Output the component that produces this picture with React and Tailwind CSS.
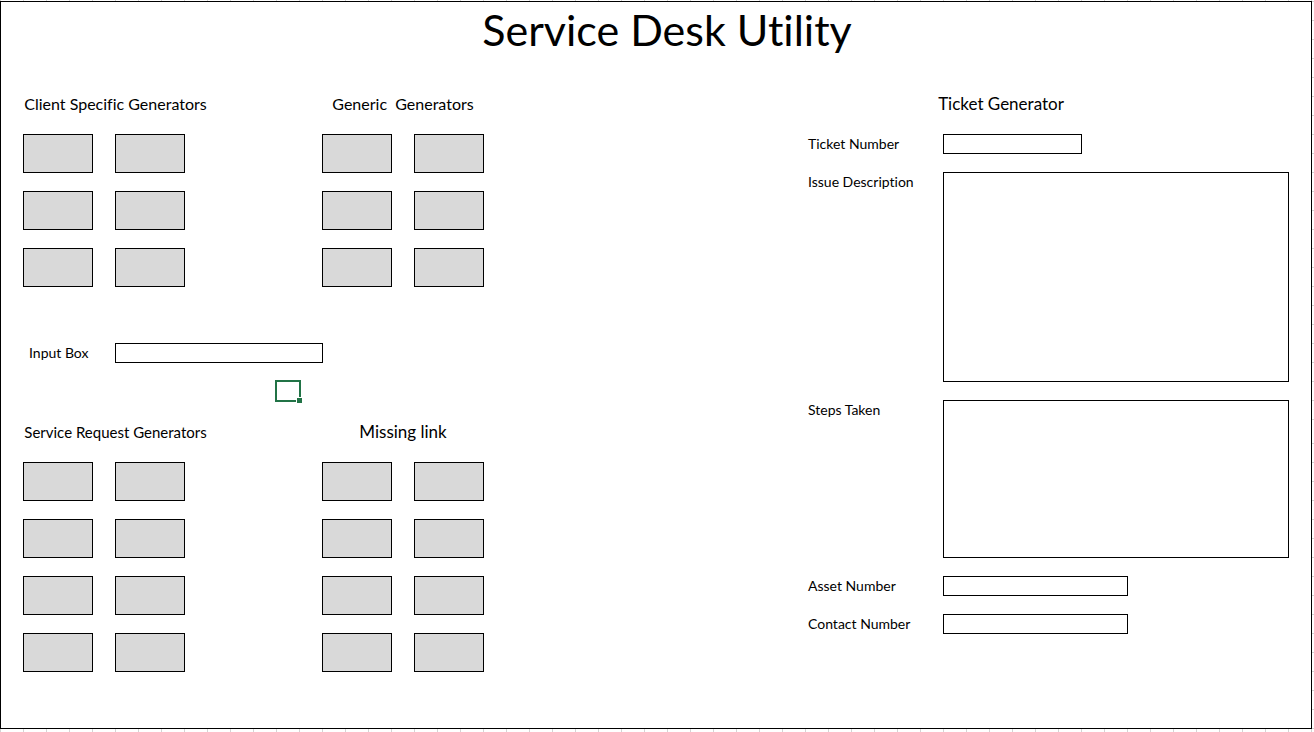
import React from "react";

function GeneratorGroup({ title, rows, titleClass }) {
  return (
    <section>
      <h2 className={`mb-[18px] h-6 text-center leading-6 whitespace-pre ${titleClass}`}>{title}</h2>
      <div className="grid grid-cols-[70px_70px] gap-x-[22px] gap-y-[18px]">
        {Array.from({ length: rows * 2 }, (_, i) => (
          <button
            key={i}
            type="button"
            aria-label={`${title} ${i + 1}`}
            className="h-[39px] border border-black bg-[#d9d9d9]"
          />
        ))}
      </div>
    </section>
  );
}

const groupGrid = "grid grid-cols-[185px_162px] gap-x-[114px]";
const boxClass = "block border border-black bg-white px-1 text-sm outline-none";

function Field({ id, label, className, multiline }) {
  return (
    <>
      <label htmlFor={id} className="h-5 text-[14px] leading-5">{label}</label>
      {multiline ? (
        <textarea id={id} className={`${boxClass} resize-none ${className}`} />
      ) : (
        <input id={id} type="text" className={`${boxClass} h-5 ${className}`} />
      )}
    </>
  );
}

function SelectedCell() {
  return (
    <div className="relative h-[22px] w-[26px] border-2 border-[#217346]">
      <span className="absolute -right-[3px] -bottom-[3px] size-[6px] border-t border-l border-white bg-[#217346]" />
    </div>
  );
}

export default function App() {
  return (
    <div className="grid grid-cols-[1fr_2px] grid-rows-[1px_1fr_3px] bg-white font-[Lato,Carlito,sans-serif] text-black [font-variant-ligatures:none]">
      <div className="col-span-2 bg-[repeating-linear-gradient(to_right,#d4d4d4_0_1px,#fff_1px_23px)]" />
      <main className="border border-black pl-[22px] pb-14">
        <h1 className="h-[90px] text-center text-[43px] leading-[56px]">Service Desk Utility</h1>
        <div className="flex items-start justify-between gap-8 pr-[22px]">
          <div>
            <div className={groupGrid}>
              <GeneratorGroup title="Client Specific Generators" rows={3} titleClass="text-[16px]" />
              <GeneratorGroup title="Generic  Generators" rows={3} titleClass="text-[16px]" />
            </div>
            <div className="mt-14 flex">
              <label htmlFor="input-box" className="w-[92px] pl-[6px] text-[14px] leading-5">Input Box</label>
              <input id="input-box" type="text" className={`${boxClass} h-5 w-[208px]`} />
            </div>
            <div className="mt-[17px] mb-[17px] h-[23px] pl-[252px]">
              <SelectedCell />
            </div>
            <div className={groupGrid}>
              <GeneratorGroup title="Service Request Generators" rows={4} titleClass="text-[15px]" />
              <GeneratorGroup title="Missing link" rows={4} titleClass="text-[17px]" />
            </div>
          </div>
          <form>
            <h2 className="mb-[18px] ml-[112px] h-6 w-[162px] text-center text-[17px] leading-6">Ticket Generator</h2>
            <div className="grid grid-cols-[135px_346px] gap-y-[18px]">
              <Field id="ticket-number" label="Ticket Number" className="w-[139px]" />
              <Field id="issue-description" label="Issue Description" className="h-[210px]" multiline />
              <Field id="steps-taken" label="Steps Taken" className="h-[158px]" multiline />
              <Field id="asset-number" label="Asset Number" className="w-[185px]" />
              <Field id="contact-number" label="Contact Number" className="w-[185px]" />
            </div>
          </form>
        </div>
      </main>
      <div className="flex flex-col">
        <div className="mb-[19px] h-[423px] bg-[linear-gradient(#d4d4d4_1px,#fff_1px)] bg-[length:2px_19px] bg-repeat-y" />
        <div className="flex-1 bg-[linear-gradient(#d4d4d4_1px,#fff_1px)] bg-[length:2px_19px] bg-repeat-y" />
      </div>
      <div className="col-span-2 bg-[repeating-linear-gradient(to_right,#d4d4d4_0_1px,#fff_1px_23px)]" />
    </div>
  );
}
